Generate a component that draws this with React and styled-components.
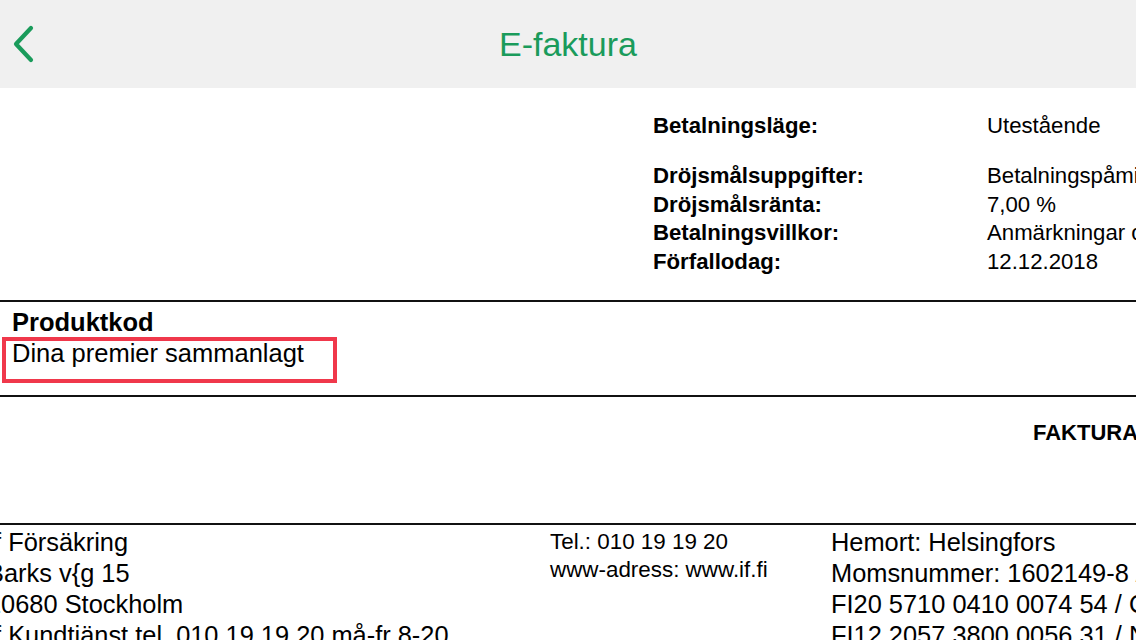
import React from "react";
import styled, { createGlobalStyle } from "styled-components";

const GlobalStyle = createGlobalStyle`
  html, body {
    margin: 0;
    padding: 0;
    background: #ffffff;
    overflow: hidden;
  }
  body {
    width: 1136px;
    height: 640px;
    font-family: "Liberation Sans", Arial, sans-serif;
    color: #000;
  }
`;

const Screen = styled.div`
  width: 1136px;
  height: 640px;
  overflow: hidden;
  display: flex;
  flex-direction: column;
`;

const NavBar = styled.header`
  height: 88px;
  flex: 0 0 88px;
  background-color: #f0f0f0;
  position: relative;
  display: flex;
  align-items: center;
  justify-content: center;
`;

const BackButton = styled.button`
  position: absolute;
  left: 8px;
  top: 22px;
  width: 32px;
  height: 44px;
  padding: 0;
  border: none;
  background: transparent;
  display: flex;
  align-items: center;
  justify-content: center;
`;

const Title = styled.h1`
  margin: 0;
  font-family: "Liberation Sans", Arial, sans-serif;
  font-weight: 400;
  font-size: 34px;
  color: #1a9b5b;
`;

// the invoice page is wider than the screen and gets cut at the edges
const Document = styled.main`
  flex: 1;
  width: 1400px;
  white-space: nowrap;
`;

const InfoBlock = styled.section`
  padding: 24px 0 23px 653px;
  font-size: 22.2px;
`;

const InfoRow = styled.div`
  display: grid;
  grid-template-columns: 334px auto;
  line-height: ${(p) => p.$lh || 28.8}px;
  margin-bottom: ${(p) => p.$gap || 0}px;
`;

const Label = styled.span`
  font-weight: 700;
`;

const Value = styled.span`
  font-weight: 400;
`;

const Rule = styled.hr`
  margin: 0;
  border: none;
  height: 2px;
  background: #111;
`;

const ProductSection = styled.section`
  padding: 5px 0 26px 12px;
  font-size: 25.5px;
  line-height: 31px;
`;

const ProductHead = styled.div`
  font-weight: 700;
`;

const Highlighted = styled.div`
  position: relative;
  display: inline-block;

  &::after {
    content: "";
    position: absolute;
    left: -10px;
    right: -33px;
    top: -1px;
    bottom: -14px;
    border: 4px solid #f0384b;
  }
`;

const InvoiceSection = styled.section`
  height: 126px;
  padding: 22px 0 0 1033px;
  box-sizing: border-box;
  font-size: 22px;
  line-height: 28px;
  font-weight: 700;
`;

const Footer = styled.footer`
  display: grid;
  grid-template-columns: 563px 281px auto;
  margin-left: -13px;
  padding-top: 2px;
`;

const FooterCol = styled.div`
  font-size: ${(p) => p.$size || 25.4}px;
  line-height: ${(p) => p.$lh || 31}px;
  padding-top: ${(p) => p.$pt || 0}px;
`;

const Chevron = () => (
  <svg width="22" height="38" viewBox="0 0 22 38" fill="none">
    <path
      d="M18 3 L3 19 L18 35"
      stroke="#1a9b5b"
      strokeWidth="4.2"
      strokeLinecap="round"
      strokeLinejoin="round"
    />
  </svg>
);

const terms = [
  ["Dröjsmålsuppgifter:", "Betalningspåminnelse 5,00 euro"],
  ["Dröjsmålsränta:", "7,00 %"],
  ["Betalningsvillkor:", "Anmärkningar om fakturan inom 8 dagar"],
  ["Förfallodag:", "12.12.2018"],
];

export default function App() {
  return (
    <>
      <GlobalStyle />
      <Screen>
        <NavBar>
          <BackButton aria-label="Tillbaka">
            <Chevron />
          </BackButton>
          <Title>E-faktura</Title>
        </NavBar>
        <Document>
          <InfoBlock>
            <InfoRow $gap={21}>
              <Label>Betalningsläge:</Label>
              <Value>Utestående</Value>
            </InfoRow>
            {terms.map(([label, value]) => (
              <InfoRow key={label}>
                <Label>{label}</Label>
                <Value>{value}</Value>
              </InfoRow>
            ))}
          </InfoBlock>
          <Rule />
          <ProductSection>
            <ProductHead>Produktkod</ProductHead>
            <Highlighted>Dina premier sammanlagt</Highlighted>
          </ProductSection>
          <Rule />
          <InvoiceSection>FAKTURA</InvoiceSection>
          <Rule />
          <Footer>
            <FooterCol>
              <div>If Försäkring</div>
              <div>Barks v{"{"}g 15</div>
              <div>10680 Stockholm</div>
              <div>If Kundtjänst tel. 010 19 19 20 må-fr 8-20</div>
            </FooterCol>
            <FooterCol $size={22.4} $lh={28} $pt={1}>
              <div>Tel.: 010 19 19 20</div>
              <div>www-adress: www.if.fi</div>
            </FooterCol>
            <FooterCol>
              <div>Hemort: Helsingfors</div>
              <div>Momsnummer: 1602149-8 / FI16021498</div>
              <div>FI20 5710 0410 0074 54 / OKOYFIHH</div>
              <div>FI12 2057 3800 0056 31 / NDEAFIHH</div>
            </FooterCol>
          </Footer>
        </Document>
      </Screen>
    </>
  );
}
